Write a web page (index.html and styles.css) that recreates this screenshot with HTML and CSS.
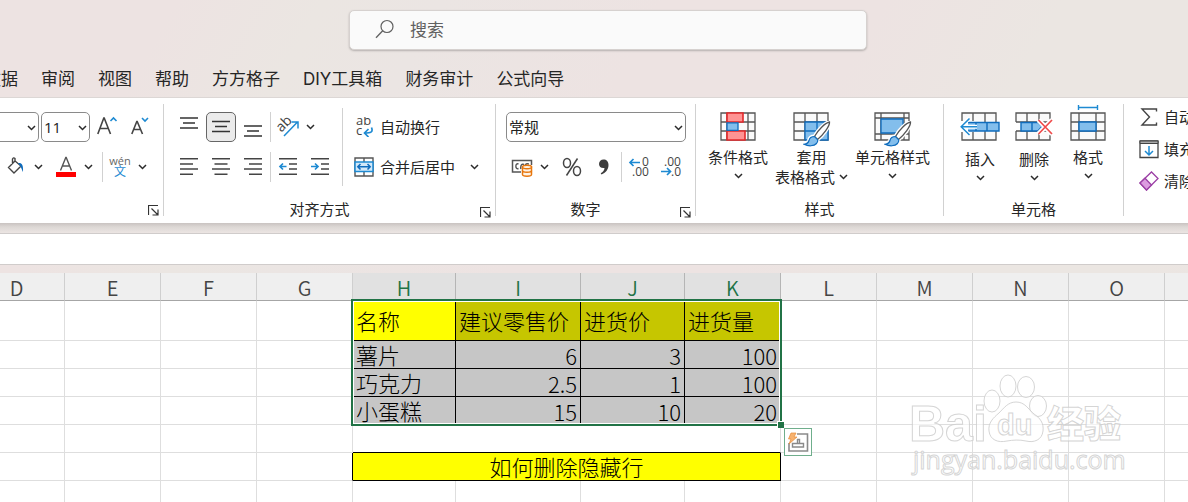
FILE: index.html
```html
<!DOCTYPE html>
<html lang="zh-CN">
<head>
<meta charset="utf-8">
<title>Excel</title>
<link rel="stylesheet" href="styles.css">
</head>
<body>
<svg class="defs" aria-hidden="true">
  <symbol id="chev" viewBox="0 0 9 6"><path d="M1 1l3.500 3.500L8 1" fill="none" stroke="#2b2b2b" stroke-width="1.500"/></symbol>
  <symbol id="launch" viewBox="0 0 11 11"><path d="M.5 10V.5H10M3.500 3.500l6 6M10 4.500V10H4.500" fill="none" stroke="#333" stroke-width="1.200"/></symbol>
  <symbol id="brush" viewBox="0 0 28 26"><path d="M26.500 1C22 2 15 9 11.500 15.500c-3 0-5 1.500-5.500 4C5.500 21.500 4 23 1 23.300c4 2 10 2.200 12.500-.8 1-1.300 1.300-2.500 1-4C20 14 26.500 5.500 26.500 1z" fill="none" stroke="#fff" stroke-width="4"/><path d="M26.500 1C22 2 15 9 11.500 15.500l3 3C20 14 27 5 26.500 1z" fill="#fff" stroke="#555" stroke-width="1.300"/><path d="M11.500 15.500c-3 0-5 1.500-5.500 4C5.500 21.500 4 23 1 23.300c4 2 10 2.200 12.500-.8 1-1.300 1.500-3 1-4z" fill="#83beec" stroke="#0f6cbd" stroke-width="1.200"/></symbol>
</svg>

<header class="titlebar">
  <label class="search">
    <svg width="20" height="20" viewBox="0 0 20 20"><circle cx="12" cy="7.500" r="6" fill="none" stroke="#616161" stroke-width="1.200"/><path d="M7.700 11.800L1 18.800" stroke="#616161" stroke-width="1.300"/></svg>
    <input type="text" placeholder="搜索" aria-label="搜索">
  </label>
</header>

<nav class="tabs">
  <button>数据</button><button>审阅</button><button>视图</button><button>帮助</button><button>方方格子</button><button>DIY工具箱</button><button>财务审计</button><button>公式向导</button>
</nav>

<main class="ribbon">
  <section class="group font-group">
    <div class="row">
      <span class="combo combo-cut"><select aria-label="字体"><option></option></select><svg class="chev"><use href="#chev"/></svg></span>
      <span class="combo combo-size"><select aria-label="字号"><option>11</option></select><svg class="chev"><use href="#chev"/></svg></span>
      <button class="tool" aria-label="增大字号"><svg width="20" height="24" viewBox="0 0 20 24"><path d="M.8 19L6.800 3h.4L13.500 19M3.200 13.500h8" fill="none" stroke="#444" stroke-width="1.600"/><path d="M13.500 6L16.500 3l3 3" fill="none" stroke="#1e8ad2" stroke-width="1.600"/></svg></button>
      <button class="tool" aria-label="减小字号"><svg width="18" height="24" viewBox="0 0 18 24"><path d="M.8 19L5.800 6.500h.4L11.500 19M3 14.500h6.500" fill="none" stroke="#444" stroke-width="1.600"/><path d="M11 3l3 3 3-3" fill="none" stroke="#1e8ad2" stroke-width="1.600"/></svg></button>
    </div>
    <div class="row">
      <button class="tool" aria-label="填充颜色"><svg width="18" height="20" viewBox="0 0 18 20"><path d="M8 4L1.500 10.500 7 16l7-7-6-5V1.500Q6.500 0 5.500 2v5" fill="none" stroke="#444" stroke-width="1.400"/><path d="M11 6c3.500-.5 5.500 1 5 9-1.500-3-1.500-5-5-9z" fill="#0f6cbd"/></svg></button>
      <button class="drop" aria-label="更多填充颜色"><svg class="chev"><use href="#chev"/></svg></button>
      <button class="tool shift" aria-label="字体颜色"><svg width="20" height="22" viewBox="0 0 20 22"><path d="M4.500 14.500L9.800 1.500h.4L15.500 14.500M6.500 10h7" fill="none" stroke="#555" stroke-width="1.400"/><path d="M0 16h20v5H0z" fill="#f00"/></svg></button>
      <button class="drop" aria-label="更多字体颜色"><svg class="chev"><use href="#chev"/></svg></button>
      <i class="bar bar-pad"></i>
      <button class="tool pinyin"><span>wén</span><b>文</b></button>
      <button class="drop" aria-label="拼音选项"><svg class="chev"><use href="#chev"/></svg></button>
    </div>
    <footer><span></span><button class="launch" aria-label="字体设置"><svg width="11" height="11"><use href="#launch"/></svg></button></footer>
  </section>

  <section class="group align-group">
    <div class="cols">
      <div>
        <div class="row">
          <button class="tool" aria-label="顶端对齐"><svg width="18" height="20" viewBox="0 0 18 20"><path d="M0 1h18M3 6h12M0 11h18" stroke="#333" stroke-width="1.400"/></svg></button>
          <button class="tool on" aria-label="垂直居中"><svg width="18" height="18" viewBox="0 0 18 18"><path d="M0 3.500h18M3 8.500h12M0 13.500h18" stroke="#333" stroke-width="1.400"/></svg></button>
          <button class="tool" aria-label="底端对齐"><svg width="18" height="20" viewBox="0 0 18 20"><path d="M0 9h18M3 14h12M0 19h18" stroke="#333" stroke-width="1.400"/></svg></button>
          <i class="bar"></i>
          <button class="tool" aria-label="方向"><svg width="22" height="22" viewBox="0 0 22 22"><text class="ab" text-anchor="middle" transform="translate(10 11) rotate(-45)">ab</text><path d="M7 20L20.500 6M14.500 6h6.500v6.500" fill="none" stroke="#1e8ad2" stroke-width="1.500"/></svg></button>
          <button class="drop" aria-label="方向选项"><svg class="chev"><use href="#chev"/></svg></button>
        </div>
        <div class="row">
          <button class="tool" aria-label="左对齐"><svg width="18" height="18" viewBox="0 0 18 18"><path d="M0 .8h18M0 6h13M0 11h18M0 16.200h13" stroke="#444" stroke-width="1.500"/></svg></button>
          <button class="tool" aria-label="居中"><svg width="18" height="18" viewBox="0 0 18 18"><path d="M0 .8h18M2.500 6h13M0 11h18M2.500 16.200h13" stroke="#444" stroke-width="1.500"/></svg></button>
          <button class="tool" aria-label="右对齐"><svg width="18" height="18" viewBox="0 0 18 18"><path d="M0 .8h18M5 6h13M0 11h18M5 16.200h13" stroke="#444" stroke-width="1.500"/></svg></button>
          <i class="bar"></i>
          <button class="tool" aria-label="减少缩进"><svg width="18" height="18" viewBox="0 0 18 18"><path d="M0 .8h18M10 6h8M10 11h8M0 16.200h18" stroke="#444" stroke-width="1.500"/><path d="M7.500 8.500H1M4 5.500L1 8.500l3 3" fill="none" stroke="#1e8ad2" stroke-width="1.700"/></svg></button>
          <button class="tool" aria-label="增加缩进"><svg width="18" height="18" viewBox="0 0 18 18"><path d="M0 .8h18M10 6h8M10 11h8M0 16.200h18" stroke="#444" stroke-width="1.500"/><path d="M0 8.500h6.500M4 5.500l3 3-3 3" fill="none" stroke="#1e8ad2" stroke-width="1.700"/></svg></button>
        </div>
      </div>
      <i class="bar bar-tall"></i>
      <div class="wraps">
        <div class="row">
          <button class="wide"><svg width="20" height="20" viewBox="0 0 20 20"><text class="abc" x="2" y="8">ab</text><text class="abc" x="2" y="18">c</text><path d="M17.500 10.500c2 5-1 5.500-7 5.500M14.500 12l-4 4 4 4" fill="none" stroke="#1e8ad2" stroke-width="1.700"/></svg>自动换行</button>
        </div>
        <div class="row">
          <button class="wide"><svg width="20" height="20" viewBox="0 0 20 20"><path d="M1 1h18v18H1zM10 1v4M10 15v4" fill="none" stroke="#555" stroke-width="1.400"/><path d="M1 5h18v9.500H1z" fill="#d3e8f8" stroke="#1e8ad2" stroke-width="1.500"/><path d="M4 9.800h12M6.500 7L3.800 9.800l2.700 2.800M13.500 7l2.700 2.800-2.700 2.800" fill="none" stroke="#0f6cbd" stroke-width="1.500"/></svg>合并后居中</button>
          <button class="drop merge" aria-label="合并选项"><svg class="chev"><use href="#chev"/></svg></button>
        </div>
      </div>
    </div>
    <footer><span>对齐方式</span><button class="launch" aria-label="对齐设置"><svg width="11" height="11"><use href="#launch"/></svg></button></footer>
  </section>

  <section class="group number-group">
    <div class="row">
      <span class="combo combo-format"><select aria-label="数字格式"><option>常规</option></select><svg class="chev"><use href="#chev"/></svg></span>
    </div>
    <div class="row">
      <button class="tool" aria-label="会计数字格式"><svg width="22" height="20" viewBox="0 0 22 20"><path d="M10 15H1.500V3.500h19V8" fill="none" stroke="#555" stroke-width="1.500"/><path d="M7.500 7C4 5.500 4 13 7.500 11.500M13 7.500C9.500 6 9.500 11 10 12M14 8c2-2 3-1 4-1" fill="none" stroke="#555" stroke-width="1.400"/><path d="M11.500 10v7.500c0 2.200 9 2.200 9 0V10z" fill="#fff3e6" stroke="#e8770e" stroke-width="1.500"/><ellipse cx="16" cy="10" rx="4.500" ry="1.700" fill="#fff3e6" stroke="#e8770e" stroke-width="1.500"/><path d="M11.500 13.800c0 2 9 2 9 0" fill="none" stroke="#e8770e" stroke-width="1.500"/></svg></button>
      <button class="drop" aria-label="货币选项"><svg class="chev"><use href="#chev"/></svg></button>
      <button class="tool shift" aria-label="百分比样式"><svg width="20" height="20" viewBox="0 0 20 20"><g fill="none" stroke="#444" stroke-width="1.500"><ellipse cx="5" cy="6" rx="3.500" ry="4.500"/><ellipse cx="15" cy="14" rx="3.500" ry="4.500"/><path d="M15.500 1.500L4.500 18.500"/></g></svg></button>
      <button class="tool" aria-label="千位分隔样式"><svg width="12" height="18" viewBox="0 0 12 18"><path d="M5.500 1.500c3 0 5 2 5 5.500 0 4.500-3 8-7 9.500l-.8-1.200C5 14 6.500 12 6.500 10 3 10.500 1 8.500 1 6c0-2.500 2-4.500 4.500-4.500z" fill="#3c3c3c"/></svg></button>
      <i class="bar"></i>
      <button class="tool" aria-label="增加小数位数"><svg width="22" height="22" viewBox="0 0 22 22"><text class="dec" x="14" y="10">0</text><text class="dec" x="4" y="20">.00</text><path d="M12 6.500H2M5.500 3L2 6.500l3.500 3.500" fill="none" stroke="#1e8ad2" stroke-width="1.700"/></svg></button>
      <button class="tool" aria-label="减少小数位数"><svg width="22" height="22" viewBox="0 0 22 22"><text class="dec" x="4" y="10">.00</text><text class="dec" x="11" y="20">.0</text><path d="M1 15.500h9M7 12l3.500 3.500L7 19" fill="none" stroke="#1e8ad2" stroke-width="1.700"/></svg></button>
    </div>
    <footer><span>数字</span><button class="launch" aria-label="数字设置"><svg width="11" height="11"><use href="#launch"/></svg></button></footer>
  </section>

  <section class="group style-group">
    <div class="bigs">
      <button class="big"><svg class="icon" width="36" height="29" viewBox="0 0 36 29"><path d="M1 1h34v27H1zM1 10h34M1 19h34M7 1v27M28 1v27M17 1v27" fill="#fafafa" stroke="#555" stroke-width="1.300"/><path d="M7 1h16v9H7zM7 19h18v9H7z" fill="#ff9393" stroke="#e3292b" stroke-width="1.600"/><path d="M7 10.800h11v7.500H7z" fill="#83beec" stroke="#0f6cbd" stroke-width="1.300"/></svg><span>条件格式</span><svg class="chev"><use href="#chev"/></svg></button>
      <button class="big"><svg class="icon tall" width="38" height="35" viewBox="0 0 38 35"><path d="M1 1h34v27H1zM1 10h34M1 19h34M12 1v27M24 1v27" fill="#fafafa" stroke="#555" stroke-width="1.300"/><path d="M12 10h23v18H12zM12 19h23M24 10v18" fill="#83beec" stroke="#0f6cbd" stroke-width="1.300"/><use href="#brush" x="10" y="9" width="28" height="26"/></svg><span>套用</span><span class="line">表格格式<svg class="chev"><use href="#chev"/></svg></span></button>
      <button class="big"><svg class="icon tall" width="38" height="35" viewBox="0 0 38 35"><path d="M1 1h34v27H1zM1 6h34M1 22h34M7 1v27M30 1v27" fill="#fafafa" stroke="#555" stroke-width="1.300"/><path d="M7 7h22v14H7z" fill="#83beec" stroke="#0f6cbd" stroke-width="1.300"/><use href="#brush" x="10" y="9" width="28" height="26"/></svg><span>单元格样式</span><svg class="chev"><use href="#chev"/></svg></button>
    </div>
    <footer class="plain"><span>样式</span></footer>
  </section>

  <section class="group cell-group">
    <div class="bigs">
      <button class="big low"><svg class="icon" width="40" height="29" viewBox="0 0 40 29"><path d="M2 1h34v27H2zM13 1v27M25 1v27" fill="#fafafa" stroke="#555" stroke-width="1.300"/><path d="M0 9h16v11H0z" fill="#fff"/><path d="M8 10.500h31v8.500H8M16 10.500V19M27 10.500V19" fill="#83beec" stroke="#0f6cbd" stroke-width="1.400"/><path d="M17 14.700H2M9.500 6L1 14.700l8.500 8.800" fill="none" stroke="#fff" stroke-width="4"/><path d="M17 14.700H1.500M9.500 6.500L1.200 14.700l8.300 8.300" fill="none" stroke="#1e8ad2" stroke-width="1.500"/></svg><span>插入</span><svg class="chev"><use href="#chev"/></svg></button>
      <button class="big low"><svg class="icon" width="38" height="29" viewBox="0 0 38 29"><path d="M1 10V1h34v9H1M1 19v9h34v-9H1M12 1v9M24 1v9M12 19v9M24 19v9" fill="#fafafa" stroke="#555" stroke-width="1.300"/><path d="M6 10.500h17l4 4-4 4.500H6zM17 10.500V19" fill="#83beec" stroke="#0f6cbd" stroke-width="1.400"/><path d="M23.500 8L37 22M37 8L23.500 22" stroke="#fff" stroke-width="5"/><path d="M23.500 8L37 22M37 8L23.500 22" stroke="#ef4a4a" stroke-width="1.700"/></svg><span>删除</span><svg class="chev"><use href="#chev"/></svg></button>
      <button class="big"><svg class="icon high" width="36" height="36" viewBox="0 0 36 36"><path d="M1 8h34v27H1zM1 17h34M1 26h34M9 8v27M26 8v27" fill="#fafafa" stroke="#555" stroke-width="1.300"/><path d="M9 17h17v9H9z" fill="#83beec" stroke="#0f6cbd" stroke-width="1.400"/><path d="M8.500 2.500h19M8.500 0v5M27.500 0v5" stroke="#1e8ad2" stroke-width="1.400"/></svg><span>格式</span><svg class="chev"><use href="#chev"/></svg></button>
    </div>
    <footer class="plain"><span>单元格</span></footer>
  </section>

  <section class="edit-group">
    <button class="wide"><svg width="20" height="20" viewBox="0 0 20 20"><path d="M17.500 4.500V2H3l7.500 8L3 18h14.500v-2.500" fill="none" stroke="#444" stroke-width="1.400"/></svg>自动求和</button>
    <button class="wide"><svg width="20" height="20" viewBox="0 0 20 20"><path d="M1 2h18v16.500H1z" fill="#fff" stroke="#444" stroke-width="1.300"/><path d="M1 2h18v2.500H1z" fill="#aaa" stroke="#444"/><path d="M10 7v9M6 12l4 4 4-4" fill="none" stroke="#1e8ad2" stroke-width="1.500"/></svg>填充</button>
    <button class="wide"><svg width="20" height="20" viewBox="0 0 20 20"><path d="M1 12L12.500 1l6.500 6.500L7.500 19z" fill="#fff" stroke="#9b3fa5" stroke-width="1.300"/><path d="M1 12l5-4.800 6.500 6.800-5 5z" fill="#dc9be0" stroke="#9b3fa5" stroke-width="1.300"/></svg>清除</button>
  </section>
</main>

<div class="formula"><input type="text" aria-label="编辑栏"></div>

<div class="sheet">
  <table>
    <colgroup><col span="4"><col class="c-h"><col class="c-i"><col class="c-j"><col span="6"></colgroup>
    <thead>
      <tr><th>D</th><th>E</th><th>F</th><th>G</th><th class="sel">H</th><th class="sel">I</th><th class="sel">J</th><th class="sel">K</th><th>L</th><th>M</th><th>N</th><th>O</th><th></th></tr>
    </thead>
    <tbody>
      <tr class="first"><td></td><td></td><td></td><td></td><td class="b active">名称</td><td class="b gold">建议零售价</td><td class="b gold">进货价</td><td class="b gold">进货量</td><td></td><td></td><td></td><td></td><td></td></tr>
      <tr><td></td><td></td><td></td><td></td><td class="b">薯片</td><td class="b num">6</td><td class="b num">3</td><td class="b num">100</td><td></td><td></td><td></td><td></td><td></td></tr>
      <tr><td></td><td></td><td></td><td></td><td class="b">巧克力</td><td class="b num">2.5</td><td class="b num">1</td><td class="b num">100</td><td></td><td></td><td></td><td></td><td></td></tr>
      <tr><td></td><td></td><td></td><td></td><td class="b">小蛋糕</td><td class="b num">15</td><td class="b num">10</td><td class="b num">20</td><td></td><td></td><td></td><td></td><td></td></tr>
      <tr><td></td><td></td><td></td><td></td><td colspan="4" class="above"></td><td></td><td></td><td></td><td></td><td></td></tr>
      <tr><td></td><td></td><td></td><td class="beside"></td><td colspan="4" class="b banner">如何删除隐藏行</td><td></td><td></td><td></td><td></td><td></td></tr>
      <tr><td></td><td></td><td></td><td></td><td></td><td></td><td></td><td></td><td></td><td></td><td></td><td></td><td></td></tr>
    </tbody>
  </table>
  <div class="selection"><i></i></div>
  <button class="quick" aria-label="快速分析"><svg width="22" height="22" viewBox="0 0 22 22"><path d="M10 3h10.500v17H2V12" fill="none" stroke="#8a8a8a" stroke-width="1.600"/><path d="M5.500 12.500h11v3.500h-11zM10.500 12V8.500h2V12" fill="none" stroke="#8a8a8a" stroke-width="1.400"/><path d="M4 2h5L7 6h3L2 13l2-5H1.500z" fill="#f7b26f" stroke="#e58c3a" stroke-width=".7"/></svg></button>
  <svg class="mark" width="240" height="115" viewBox="0 0 240 115">
    <text class="m-bai" x="19" y="72">Bai</text>
    <ellipse cx="102" cy="32" rx="8" ry="11"/><ellipse cx="118" cy="17" rx="8" ry="11"/><ellipse cx="136" cy="18" rx="8.500" ry="10.500"/><ellipse cx="148" cy="37" rx="8.500" ry="10.500"/>
    <path d="M126 33c9 0 12 7 18 12 6 4 10 9 9 17-1 9-9 12-17 10-7-1.500-13-1-19 0-9 2-17-1-18-10-1-8 4-13 10-18 5-5 9-11 17-11z"/>
    <text class="m-du" x="107" y="66">du</text>
    <text class="m-cn" x="157" y="69">经验</text>
    <text class="m-url" x="23" y="100">jingyan.baidu.com</text>
  </svg>
</div>
</body>
</html>
```
FILE: styles.css
```css
* { box-sizing: border-box; }
body {
  margin: 0;
  height: 100vh;
  overflow: hidden;
  display: flex;
  flex-direction: column;
  font: 15px/20px "Open Sans", "Noto Sans CJK SC", sans-serif;
  color: #262626;
  background: linear-gradient(120deg, #ede3e2 0, #ede3e2 12%, #ebe6e2 22%, #ebe5e3 30%, #ede3e2 45%, #ede3e2 60%, #ebe6e2 72%, #ebe6e2 88%, #ede3e2 100%);
}
button { font: inherit; color: inherit; background: none; border: 0; padding: 0; white-space: nowrap; }
svg { display: block; flex: none; }
.defs { position: absolute; width: 0; height: 0; }
.chev { width: 9px; height: 6px; }

.titlebar { display: grid; grid-template-columns: 349fr 518fr 321fr; padding: 10px 0; flex: none; }
.search {
  grid-column: 2; display: flex; align-items: center; gap: 15px; height: 40px; padding: 0 25px 2px;
  background: #fafafa; border: 1px solid #d6d1cf; border-radius: 5px; box-shadow: 0 1px 2px #b5b0ae;
}
.search input { flex: 1; min-width: 0; border: 0; padding: 0; background: none; font: 17px/24px "Noto Sans CJK SC", sans-serif; }
.search input::placeholder { color: #616161; opacity: 1; }

.tabs { display: flex; gap: 23px; height: 37px; margin-left: -16px; padding-top: 1px; flex: none; font-size: 17px; font-family: Inter, "Noto Sans CJK SC", sans-serif; }

.ribbon { display: flex; flex: none; height: 126px; padding: 6px 0; overflow: hidden; background: #fff; border-top: 1px solid #dcd7d5; }
.group { display: flex; flex-direction: column; flex: none; height: 112px; padding-top: 3px; border-right: 1px solid #d1d1d1; }
.font-group { width: 164px; }
.align-group { width: 332px; padding-left: 9px; }
.number-group { width: 200px; padding-left: 10px; }
.style-group { width: 248px; }
.cell-group { width: 180px; }
.row { display: flex; align-items: center; height: 40px; }
.cols { display: flex; }
.tool { display: flex; align-items: center; justify-content: center; width: 32px; height: 30px; flex: none; }
.tool svg { overflow: visible; }
.tool.on { width: 30px; margin: 0 1px; background: #ebebeb; border: 1px solid #666; border-radius: 5px; }
.shift { margin-left: 5px; }
.drop { display: flex; align-items: center; justify-content: center; width: 13px; height: 30px; flex: none; }
.bar { width: 1px; height: 30px; margin: 0 1px; background: #d1d1d1; flex: none; }
.bar-pad { margin-left: 7px; }
.bar-tall { height: 78px; margin: 1px 0 0 6px; }
.pinyin { flex-direction: column; font-size: 11px; line-height: 10px; color: #666; }
.pinyin b { font-size: 12px; line-height: 12px; font-weight: 400; color: #1e8ad2; }
.combo { position: relative; display: block; height: 30px; flex: none; }
.combo select {
  appearance: none; display: block; width: 100%; height: 30px; padding: 0 2px; margin: 0; background: #fff;
  border: 1px solid #8a8a8a; border-radius: 5px; font: inherit; color: #222;
}
.combo .chev { position: absolute; right: 3px; top: 13px; }
.combo-cut { width: 39px; margin-right: 2px; }
.combo-cut select { border-left: 0; border-radius: 0 5px 5px 0; }
.combo-size { width: 49px; margin-right: 1px; }
.combo-size + .tool { margin-right: 1px; }
.combo-format { width: 180px; }
.wraps { padding-left: 11px; }
.wide { display: flex; align-items: center; gap: 5px; height: 26px; }
.wraps .wide { gap: 6px; }
.merge { margin-left: 13px; }
.ab { font: 14px "Open Sans", sans-serif; fill: #444; }
.abc { font: 13px "Open Sans", sans-serif; fill: #444; }
.dec { font: 12px "Open Sans", sans-serif; fill: #444; }

.group footer { display: grid; grid-template-columns: 1fr 20px; margin-top: auto; height: 16px; line-height: 18px; text-align: center; }
.align-group footer { margin-left: -9px; }
.number-group footer { margin-left: -10px; }
.group footer.plain { grid-template-columns: 1fr; }
.launch { align-self: end; justify-self: center; }

.bigs { display: flex; align-items: flex-start; }
.style-group .bigs { gap: 7px; padding-left: 12px; }
.cell-group .bigs { padding-left: 9px; }
.cell-group .big { width: 54px; }
.big { display: flex; flex-direction: column; align-items: center; padding-top: 5px; line-height: 20px; }
.big .icon { margin-bottom: 6px; }
.big .tall { margin-bottom: 0; }
.big .high { margin-top: -7px; }
.low .icon { margin-bottom: 8px; }
.big > .chev { margin-top: 6px; }
.line { display: flex; align-items: center; gap: 4px; }

.edit-group { display: flex; flex-direction: column; gap: 6px; flex: none; padding-left: 15px; }

.formula { flex: none; height: 50px; padding: 10px 0 8px; background: linear-gradient(#c9c3c1 0, #ddd8d5 4px, #ece5e3 10px, transparent 11px); }
.formula input { display: block; width: 100%; height: 32px; border: 1px solid #d0cccb; border-width: 1px 0; background: #fff; }

.sheet { position: relative; flex: 1; overflow: hidden; background: #fff; font-family: "Noto Sans CJK SC", sans-serif; }
table { table-layout: fixed; width: 1292px; margin-left: -31px; border-spacing: 0; }
col { width: 96px; }
.c-h { width: 103px; }
.c-i { width: 125px; }
.c-j { width: 104px; }
th, td { padding: 0 3px; border: solid #dedede; border-width: 0 1px 1px 0; overflow: hidden; white-space: nowrap; }
th { height: 28px; padding: 3px 0 0; font-size: 20px; line-height: 24px; font-weight: 350; color: #444; background: #efefef; border-bottom-color: #a6a6a6; border-right-color: #cfcfcf; }
th.sel { color: #217346; background: #e1e1e1; border-right-color: #b5b5b5; }
td { height: 28px; font-size: 22px; font-weight: 300; line-height: 27px; color: #000; }
.first td { height: 40px; }
td.b { background: #c6c6c6; border-color: #000; }
td.active { background: #ff0; }
td.gold { background: #c6c600; }
td.num { padding-top: 2px; line-height: 25px; text-align: right; }
td.above { border-bottom-color: #000; }
td.beside { border-right-color: #000; }
td.banner { background: #ff0; text-align: center; }

.selection { position: absolute; left: 351px; top: 26px; width: 431px; height: 127px; border: 2px solid #217346; box-shadow: inset 0 0 0 1px #fff; pointer-events: none; }
.selection i { position: absolute; right: -4px; bottom: -4px; width: 7px; height: 7px; background: #217346; border: solid #fff; border-width: 1px 0 0 1px; }
.quick { position: absolute; left: 784px; top: 155px; width: 28px; height: 28px; display: grid; place-items: center; background: #fff; border: 1px solid #6fae8c; }
.mark { position: absolute; left: 890px; top: 96px; fill: #fff; fill-opacity: .6; stroke: #cacaca; stroke-opacity: .8; stroke-width: 1; }
.m-bai { font: bold 50px "Liberation Sans", sans-serif; }
.m-du { font: bold 29px "Liberation Sans", sans-serif; }
.m-cn { font: 900 37px "Noto Sans CJK SC", sans-serif; }
.m-url { font: 25px "Open Sans", sans-serif; }
```
